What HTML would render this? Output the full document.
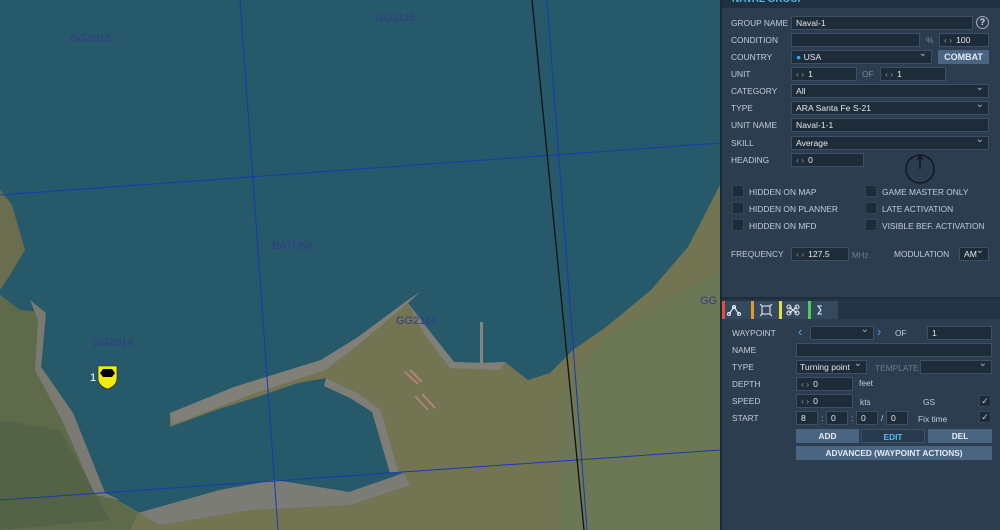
<!DOCTYPE html>
<html><head><meta charset="utf-8"><style>
*{margin:0;padding:0;box-sizing:border-box}
body{width:1000px;height:530px;overflow:hidden;position:relative;font-family:"Liberation Sans",sans-serif;background:#265a6a}
#map{position:absolute;left:0;top:0}
#panel{position:absolute;left:720px;top:0;width:280px;height:530px;background:#2c3d50;border-left:2px solid #1c2836}
.l{position:absolute;font-size:8.4px;color:#c3ccd6;white-space:nowrap}
.f{position:absolute;height:14px;background:#1e2b39;border:1px solid #3d4f62;font-size:8.6px;color:#e2e8ee;padding-left:4px;line-height:12px;white-space:nowrap;overflow:hidden}
.f .a{color:#8e9aa8;margin-right:4px}
.dd:after{content:"⌄";position:absolute;right:4px;top:-3px;color:#aab4c0;font-size:10px}
.cb{position:absolute;width:12px;height:12px;background:#1e2b39;border:1px solid #344557}
.btn{position:absolute;height:14px;background:#4a6582;color:#e4ebf2;font-size:8.3px;font-weight:bold;text-align:center;line-height:14px}
</style></head><body>
<svg id="map" width="720" height="530">
<rect width="720" height="530" fill="#265a6a"/>
<polygon points="0,190 12,205 25,250 10,275 0,290" fill="#6b6e4e"/>
<polygon points="0,295 20,310 46,313 41,367 73,413 105,493 138,513 220,490 275,480 349,492 404,473 399,473 381,410 358,393 326,378 298,383 257,397 216,410 170,427 170,413 234,387 321,360 358,337 408,300 420,292 408,303 431,333 454,362 482,363 505,362 528,380 550,373 573,350 606,327 651,290 688,247 720,185 720,530 0,530" fill="#737452"/>
<polygon points="0,295 20,310 46,313 41,367 73,413 105,493 138,513 130,530 0,530" fill="#5e6a4a"/>
<polygon points="30,300 46,313 41,367 73,413 105,493 120,500 95,495 62,420 35,370 38,320" fill="#7a7a72"/>
<polygon points="105,493 138,513 220,490 275,480 349,492 404,473 410,485 350,505 250,510 160,525" fill="#7c7c76"/>
<polygon points="170,413 234,387 321,360 358,337 408,300 420,292 408,303 358,345 325,370 250,395 172,425" fill="#808078"/>
<polygon points="408,303 431,333 454,362 482,363 505,362 500,370 450,368 425,335" fill="#808078"/>
<polygon points="326,378 358,393 381,410 399,473 390,473 372,412 350,398 324,386" fill="#7e7e76"/>
<rect x="480" y="322" width="3" height="42" fill="#85857c"/>
<polygon points="600,340 720,270 720,530 560,530 560,400" fill="#667a58" opacity=".5"/>
<polygon points="0,420 60,430 110,520 0,530" fill="#4f5e48" opacity=".6"/>
<g stroke="#c88a8a" stroke-width="2" opacity=".7"><line x1="405" y1="372" x2="418" y2="384"/><line x1="410" y1="370" x2="422" y2="382"/><line x1="415" y1="396" x2="428" y2="410"/><line x1="422" y1="394" x2="435" y2="408"/></g>
<g stroke="#1838b8" stroke-width="1" fill="none">
<line x1="240" y1="0" x2="278" y2="530"/>
<line x1="547" y1="0" x2="587" y2="530"/>
<line x1="0" y1="195" x2="720" y2="143"/>
<line x1="0" y1="500" x2="720" y2="450"/>
</g>
<line x1="532" y1="0" x2="584" y2="530" stroke="#111" stroke-width="1.3"/>
<g fill="#333a88" font-size="11" font-family="Liberation Sans,sans-serif">
<text x="70" y="42">GG2015</text><text x="375" y="21">GG2115</text>
<text x="272" y="249">BATUMI</text><text x="92" y="346">GG2014</text>
<text x="396" y="324">GG2114</text><text x="700" y="304">GG</text></g>
<path d="M98,366 L117,366 L117,378 Q117,386 107.5,389 Q98,386 98,378 Z" fill="#f3ea10" stroke="#222" stroke-width=".6"/>
<path d="M100,373 L103,369 L112,369 L115,373 L112,377 L103,377 Z" fill="#000"/>
<text x="90" y="381" fill="#fff" font-size="11" font-family="Liberation Sans,sans-serif">1</text>
</svg>
<div id="panel">
<div style="position:absolute;left:0;top:0;width:278px;height:8px;background:#213041"></div>
<div class="l" style="left:10px;top:-6px;color:#56b8e6;font-weight:bold;font-size:10px">NAVAL GROUP</div>
<div class="l" style="left:9px;top:18px">GROUP NAME</div><div class="f" style="left:69px;top:16px;width:182px">Naval-1</div>
<div style="position:absolute;left:254px;top:16px;width:13px;height:13px;border-radius:50%;border:1px solid #aab;color:#dde;font-size:9px;font-weight:bold;text-align:center;line-height:11px">?</div>
<div class="l" style="left:9px;top:35px">CONDITION</div><div class="f" style="left:69px;top:33px;width:129px"></div>
<div class="l" style="left:204px;top:35px;color:#7c8896">%</div><div class="f" style="left:217px;top:33px;width:50px"><span class="a">‹ ›</span>100</div>
<div class="l" style="left:9px;top:52px">COUNTRY</div><div class="f dd" style="left:69px;top:50px;width:141px"><span style="color:#29a8f0">●</span> USA</div>
<div class="btn" style="left:216px;top:50px;width:51px;font-size:9px">COMBAT</div>
<div class="l" style="left:9px;top:69px">UNIT</div><div class="f" style="left:69px;top:67px;width:66px"><span class="a">‹ ›</span>1</div>
<div class="l" style="left:140px;top:69px;color:#7c8896">OF</div><div class="f" style="left:158px;top:67px;width:66px"><span class="a">‹ ›</span>1</div>
<div class="l" style="left:9px;top:86px">CATEGORY</div><div class="f dd" style="left:69px;top:84px;width:198px">All</div>
<div class="l" style="left:9px;top:103px">TYPE</div><div class="f dd" style="left:69px;top:101px;width:198px">ARA Santa Fe S-21</div>
<div class="l" style="left:9px;top:120px">UNIT NAME</div><div class="f" style="left:69px;top:118px;width:198px">Naval-1-1</div>
<div class="l" style="left:9px;top:138px">SKILL</div><div class="f dd" style="left:69px;top:136px;width:198px">Average</div>
<div class="l" style="left:9px;top:155px">HEADING</div><div class="f" style="left:69px;top:153px;width:73px"><span class="a">‹ ›</span>0</div>
<svg style="position:absolute;left:182px;top:153px" width="32" height="32"><circle cx="16" cy="16" r="14" fill="none" stroke="#111" stroke-width="1.3"/><line x1="16" y1="4" x2="16" y2="16" stroke="#111" stroke-width="1.3"/><path d="M13,7 L16,3 L19,7" fill="none" stroke="#111"/></svg>
<div class="cb" style="left:10px;top:185px"></div><div class="l" style="left:27px;top:187px">HIDDEN ON MAP</div>
<div class="cb" style="left:10px;top:202px"></div><div class="l" style="left:27px;top:204px">HIDDEN ON PLANNER</div>
<div class="cb" style="left:10px;top:219px"></div><div class="l" style="left:27px;top:221px">HIDDEN ON MFD</div>
<div class="cb" style="left:143px;top:185px"></div><div class="l" style="left:160px;top:187px">GAME MASTER ONLY</div>
<div class="cb" style="left:143px;top:202px"></div><div class="l" style="left:160px;top:204px">LATE ACTIVATION</div>
<div class="cb" style="left:143px;top:219px"></div><div class="l" style="left:160px;top:221px">VISIBLE BEF. ACTIVATION</div>
<div class="l" style="left:9px;top:249px">FREQUENCY</div><div class="f" style="left:69px;top:247px;width:58px"><span class="a">‹ ›</span>127.5</div>
<div class="l" style="left:130px;top:251px;color:#6d7a88;font-size:8px">MHz</div>
<div class="l" style="left:172px;top:249px">MODULATION</div><div class="f dd" style="left:237px;top:247px;width:30px">AM</div>
<div style="position:absolute;left:0;top:297px;width:278px;height:2px;background:#1f2c3a"></div>
<div style="position:absolute;left:0;top:299px;width:278px;height:20px;background:#243447"></div>
<div style="position:absolute;left:0;top:301px;width:116px;height:18px;background:#34485e"></div>
<div style="position:absolute;left:0;top:301px;width:3px;height:18px;background:#e84a4a"></div>
<div style="position:absolute;left:29px;top:301px;width:3px;height:18px;background:#e8982a"></div>
<div style="position:absolute;left:57px;top:301px;width:3px;height:18px;background:#e2e03a"></div>
<div style="position:absolute;left:86px;top:301px;width:3px;height:18px;background:#4ad050"></div>
<svg style="position:absolute;left:0;top:301px" width="116" height="18" fill="none" stroke="#e2e8ee" stroke-width="1.1">
<path d="M7,13 L12,6 L17,13"/><circle cx="7" cy="13" r="1.5"/><circle cx="17" cy="13" r="1.5"/><circle cx="12" cy="6" r="1.5"/>
<rect x="40" y="5" width="8" height="8"/><path d="M38,3 L40,5 M50,3 L48,5 M38,15 L40,13 M50,15 L48,13"/>
<path d="M67,6 L75,12 M75,6 L67,12"/><circle cx="67" cy="6" r="2"/><circle cx="75" cy="6" r="2"/><circle cx="67" cy="12" r="2"/><circle cx="75" cy="12" r="2"/>
<path d="M100,5 L96,5 L99,9 L96,13 L100,13"/></svg>
<div class="l" style="left:10px;top:328px">WAYPOINT</div>
<div class="l" style="left:76px;top:324px;color:#4aa0e6;font-size:13px">‹</div>
<div class="f dd" style="left:88px;top:326px;width:64px"></div>
<div class="l" style="left:155px;top:324px;color:#4aa0e6;font-size:13px">›</div>
<div class="l" style="left:173px;top:328px">OF</div><div class="f" style="left:205px;top:326px;width:65px">1</div>
<div class="l" style="left:10px;top:345px">NAME</div><div class="f" style="left:74px;top:343px;width:196px"></div>
<div class="l" style="left:10px;top:362px">TYPE</div><div class="f dd" style="left:74px;top:360px;width:71px;padding-left:3px">Turning point</div>
<div class="l" style="left:153px;top:363px;color:#6d7a88">TEMPLATE</div><div class="f dd" style="left:198px;top:360px;width:72px"></div>
<div class="l" style="left:10px;top:379px">DEPTH</div><div class="f" style="left:74px;top:377px;width:57px"><span class="a">‹ ›</span>0</div>
<div class="l" style="left:137px;top:378px">feet</div>
<div class="l" style="left:10px;top:396px">SPEED</div><div class="f" style="left:74px;top:394px;width:57px"><span class="a">‹ ›</span>0</div>
<div class="l" style="left:138px;top:397px">kts</div><div class="l" style="left:201px;top:397px">GS</div>
<div class="cb" style="left:257px;top:395px;color:#ccd;font-size:9px;line-height:10px;text-align:center">✓</div>
<div class="l" style="left:10px;top:413px">START</div>
<div class="f" style="left:74px;top:411px;width:22px">8</div><div class="l" style="left:99px;top:413px">:</div>
<div class="f" style="left:104px;top:411px;width:22px">0</div><div class="l" style="left:129px;top:413px">:</div>
<div class="f" style="left:134px;top:411px;width:22px">0</div><div class="l" style="left:159px;top:413px">/</div>
<div class="f" style="left:164px;top:411px;width:22px">0</div>
<div class="l" style="left:196px;top:414px">Fix time</div>
<div class="cb" style="left:257px;top:411px;color:#ccd;font-size:9px;line-height:10px;text-align:center">✓</div>
<div class="btn" style="left:74px;top:429px;width:63px">ADD</div>
<div class="btn" style="left:139px;top:429px;width:64px;background:#273a4e;border:1px solid #3d5066;color:#4ec0ee">EDIT</div>
<div class="btn" style="left:206px;top:429px;width:64px">DEL</div>
<div class="btn" style="left:74px;top:446px;width:196px">ADVANCED (WAYPOINT ACTIONS)</div>
</div>
</body></html>
